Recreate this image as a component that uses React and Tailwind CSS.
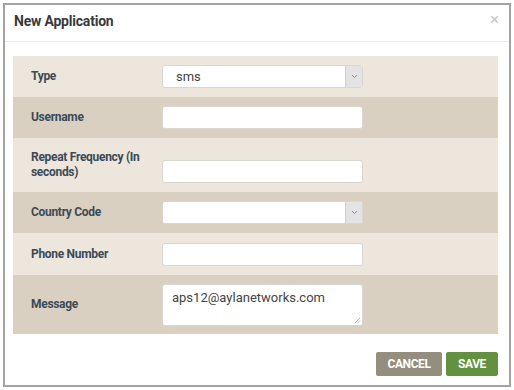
import React from 'react';

const labelCls = "text-[12px] font-bold text-[#3b4a56] leading-[15px] tracking-[-0.3px] pr-2";
const inputCls = "w-[201px] h-[23px] bg-white border border-[#d9d6d0] rounded-[3px]";

function SelectBox({ value }) {
    return (
        <div className={`${inputCls} flex items-stretch overflow-hidden`}>
            <div className="flex-1 pl-[13px] flex items-center text-[13px] text-[#444]">{value}</div>
            <div className="w-[17px] bg-[#e3e3e3] border-l border-[#d0d0d0] flex items-center justify-center">
                <svg width="7" height="5" viewBox="0 0 7 5" fill="none">
                    <path d="M1 1l2.5 2.5L6 1" stroke="#888" strokeWidth="1" />
                </svg>
            </div>
        </div>
    );
}

function Row({ label, dark, height, alignEnd, children }) {
    return (
        <div
            className={`grid grid-cols-[149px_1fr] ${dark ? 'bg-[#d9d0c2]' : 'bg-[#ede6dc]'} ${height}`}
        >
            <div className="flex items-center pl-[18px]">
                <span className={labelCls}>{label}</span>
            </div>
            <div className={`flex ${alignEnd ? 'items-end pb-[9px]' : 'items-center'}`}>{children}</div>
        </div>
    );
}

export default function App() {
    return (
        <div className="w-[514px] h-[390px] bg-white p-[3px]" style={{ fontFamily: 'Roboto, "Liberation Sans", sans-serif' }}>
            <div className="h-[384px] border-2 border-[#a3a3a3] flex flex-col">
                {/* Header */}
                <div className="h-[37px] flex items-center justify-between pl-[9px] pr-[10px] border-b border-[#ebebeb]">
                    <h1 className="text-[14px] font-bold text-[#3a3a3a] tracking-[-0.2px] -mt-[3px]">New Application</h1>
                    <span className="text-[17px] text-[#c9c9c9] -mt-[8px] leading-none">×</span>
                </div>

                {/* Body */}
                <div className="pl-[8px] pr-[11px] pt-[14px]">
                    <Row label="Type" height="h-[41px]">
                        <SelectBox value="sms" />
                    </Row>
                    <Row label="Username" dark height="h-[41px]">
                        <div className={inputCls} />
                    </Row>
                    <Row label={<>Repeat Frequency (In<br />seconds)</>} height="h-[54px]" alignEnd>
                        <div className={inputCls} />
                    </Row>
                    <Row label="Country Code" dark height="h-[41px]">
                        <SelectBox value="" />
                    </Row>
                    <Row label="Phone Number" height="h-[42px]">
                        <div className={inputCls} />
                    </Row>
                    <Row label="Message" dark height="h-[59px]">
                        <div className="relative w-[201px] h-[42px] bg-white border border-[#d9d6d0] rounded-[3px] pl-[9px] pt-[3px] text-[13px] text-[#444]">
                            aps12@aylanetworks.com
                            <svg className="absolute right-[1px] bottom-[1px]" width="7" height="7" viewBox="0 0 7 7">
                                <path d="M6 1L1 6M6 3.5L3.5 6" stroke="#aaa" strokeWidth="0.8" />
                            </svg>
                        </div>
                    </Row>
                </div>

                {/* Footer */}
                <div className="flex justify-end gap-[4px] pr-[11px] pt-[18px]">
                    <button className="w-[66px] h-[24px] rounded-[2px] bg-[#938e7d] text-white text-[12px] font-bold tracking-[-0.4px]">
                        CANCEL
                    </button>
                    <button className="w-[52px] h-[24px] rounded-[2px] bg-[#62913f] text-white text-[12px] font-bold tracking-[-0.4px]">
                        SAVE
                    </button>
                </div>
            </div>
        </div>
    );
}
